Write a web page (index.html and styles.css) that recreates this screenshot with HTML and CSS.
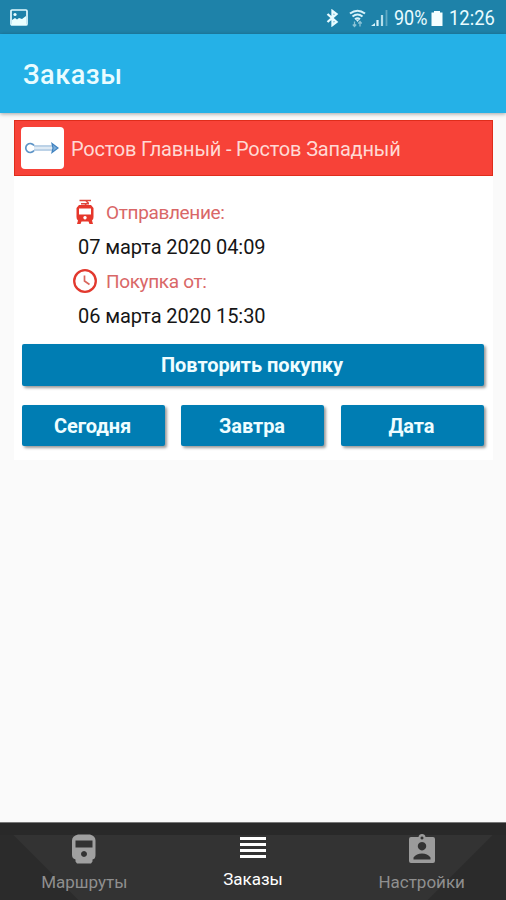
FILE: index.html
```html
<!DOCTYPE html>
<html lang="ru">
<head>
<meta charset="utf-8">
<title>Заказы</title>
<link rel="stylesheet" href="styles.css">
</head>
<body>
<div class="screen">
  <div class="status">
    <svg class="photo" width="18" height="17" viewBox="0 0 18 17"><rect x="1" y="1" width="16" height="15" rx="1" fill="none" stroke="#e4fbff" stroke-width="1.7"/><path d="M2 11l3-2 2 1.500 2-1.500 3 1 4-3v9H2z" fill="#eaffff"/><circle cx="5" cy="5.500" r="1.600" fill="#eaffff"/></svg>
    <div class="status-right">
      <svg class="bt" width="13" height="18" viewBox="0 0 13 18"><path d="M1.500 5l9 8L6.500 16V2L10.500 5l-9 8" fill="none" stroke="#e8fbff" stroke-width="2.300"/></svg>
      <svg class="wifi" width="17" height="19" viewBox="0 0 17 19"><path d="M1 4.500Q8.500-1 16 4.500M3.500 7.500Q8.500 3.500 13.500 7.500M6 10.300Q8.500 8.300 11 10.300" fill="none" stroke="#d8f3fa" stroke-width="2.100"/><path d="M7 11h3l-1.500 2z" fill="#d8f3fa"/><path d="M5.500 12.500v5M3.800 15.500l1.700 2 1.700-2M11 17.500v-5M9.300 14.500l1.700-2 1.700 2" fill="none" stroke="#8bc3d6" stroke-width="1.300"/></svg>
      <svg class="signal" width="17" height="18" viewBox="0 0 17 18"><path d="M0 17h4v-3z" fill="#d8f3fa"/><path d="M6.500 11v6" stroke="#d8f3fa" stroke-width="2.200"/><path d="M11 6v11" stroke="#b5deea" stroke-width="2.200"/><path d="M15.500 1v16" stroke="#60a9c3" stroke-width="1.800"/></svg>
      <span class="percent">90%</span>
      <svg class="battery" width="12" height="17" viewBox="0 0 12 17"><path d="M3 1h6v1.500h2.500v13.500H.5V2.500H3z" fill="#f5ffff"/></svg>
      <span class="time">12:26</span>
    </div>
  </div>
  <header class="bar"><h1>Заказы</h1></header>
  <main>
    <article class="card">
      <div class="route">
        <div class="badge"><svg width="42" height="42" viewBox="0 0 42 42"><path d="M13 18.500A4.500 4.500 0 1 0 13 23.500" fill="none" stroke="#5d94c7" stroke-width="1.700"/><path d="M13 19H31M13 23H31" stroke="#7ba6d0" stroke-width="1.200"/><path d="M13 21H31" stroke="#d5e3f0" stroke-width="1.500"/><path d="M31 16.500l6 4.500-6 4.500 1-4.500z" fill="#7cadd9" stroke="#4183c0" stroke-width="1.200"/></svg></div>
        <span class="route-name">Ростов Главный - Ростов Западный</span>
      </div>
      <div class="details">
        <div class="label"><svg width="26" height="26" viewBox="0 0 26 26"><path d="M7.500 1.500h11.500M14 2l2 1.800L13 6M9 4.800h8" fill="none" stroke="#df473c" stroke-width="1.400"/><path fill-rule="evenodd" d="M7 6h12l2.500 3v9q0 3-1.500 3.500L21 25h-3.500l-1-2.500h-7l-1 2.500H5l1-3.500Q4.500 21 4.500 18V9zM7 9.500v6h12V9.500zM13 17a1.700 1.700 0 1 0 .01 0z" fill="#e6372b"/></svg><span>Отправление:</span></div>
        <div class="value">07 марта 2020 04:09</div>
        <div class="label"><svg width="26" height="26" viewBox="0 0 26 26"><circle cx="13" cy="13" r="10.800" fill="none" stroke="#e2392e" stroke-width="2.300"/><path d="M12.500 7.500v5.500l5 3.500" fill="none" stroke="#d9675e" stroke-width="1.700"/></svg><span>Покупка от:</span></div>
        <div class="value">06 марта 2020 15:30</div>
      </div>
      <div class="actions">
        <button class="wide">Повторить покупку</button>
        <button>Сегодня</button>
        <button>Завтра</button>
        <button>Дата</button>
      </div>
    </article>
  </main>
  <nav>
    <div class="tab"><svg width="26" height="32" viewBox="0 0 26 32"><path fill-rule="evenodd" d="M7 1.500h12q5.500 1.500 5.500 6V22q0 4-3 4.500v2l-1.500 2H6l-1.500-2v-2Q1 25.500 1 22V7.500q0-4.500 6-6zM4.500 7.500v7h17v-7zM13 18a3 3 0 1 0 .01 0z" fill="#a0a0a0"/></svg><span>Маршруты</span></div>
    <div class="tab active"><svg width="26" height="32" viewBox="0 0 26 32"><path d="M0 5.500h26M0 11.500h26M0 17.500h26M0 23.500h26" stroke="#fff" stroke-width="3"/></svg><span>Заказы</span></div>
    <div class="tab"><svg width="26" height="32" viewBox="0 0 26 32"><path fill-rule="evenodd" d="M2 4h7.500Q10 1 13 1t3.500 3H24q2 0 2 2v22q0 2-2 2H2q-2 0-2-2V6q0-2 2-2zM13 3.500a1.500 1.500 0 1 0 .01 0zM13 9a4.200 4.200 0 1 0 .01 0zM4.500 26.500h17v-2q-3-4-8.500-4t-8.500 4z" fill="#9b9b9b"/></svg><span>Настройки</span></div>
  </nav>
</div>
</body>
</html>
```
FILE: styles.css
```css
* { box-sizing: border-box; }
body { margin: 0; font-family: Roboto, sans-serif; }
.screen { width: 506px; height: 900px; display: flex; flex-direction: column; background: #fafafa; overflow: hidden; }
.status { height: 34px; flex: none; display: flex; justify-content: space-between; align-items: flex-start; padding: 9px 11px 0 11px; background: #1e82a9; color: #e9fcff; }
.photo { margin-left: -1px; }
.status-right { display: flex; height: 18px; align-items: center; font-size: 20px; line-height: 18px; }
.bt { margin-right: 10px; }
.wifi { margin-right: 5px; }
.signal { margin-right: 6px; }
.percent { width: 37px; transform: scaleX(.9); transform-origin: left; white-space: nowrap; }
.battery { margin-right: 6px; }
.time { width: 46px; transform: scaleX(.92); transform-origin: left; white-space: nowrap; }
.bar { height: 79px; flex: none; display: flex; align-items: center; padding: 2px 23px 0; background: #25b1e7; box-shadow: 0 1px 4px rgba(0,0,0,.35); }
h1 { margin: 0; color: #e9fcff; font-size: 27px; font-weight: 500; letter-spacing: .6px; }
main { flex: 1; padding: 7px 13px 0 14px; }
.card { background: #fff; height: 340px; }
.route { height: 56px; display: flex; align-items: center; gap: 7px; padding-left: 6px; background: #f74238; border: 1px solid #df2d1b; }
.badge { width: 43px; height: 42px; border-radius: 4px; background: #fff; }
.badge svg { display: block; }
.route-name { padding-top: 2px; color: #ffd9d4; font-size: 20px; letter-spacing: -.18px; white-space: nowrap; }
.details { padding: 22px 0 0 58px; }
.label { height: 27px; display: flex; align-items: center; gap: 8px; color: #d96767; font-size: 19px; letter-spacing: -.35px; }
.label span { padding-top: 1px; }
.value { height: 42px; line-height: 44px; padding-left: 6px; font-size: 20px; letter-spacing: -.06px; color: #161616; white-space: nowrap; }
.actions { display: grid; grid-template-columns: repeat(3, 143px); justify-content: space-between; gap: 19px 0; padding: 8px 9.5px 0 7.5px; }
button { height: 41.5px; padding: 1px 1px 0 0; border: 0; border-radius: 2px; background: #007db3; box-shadow: 2px 2px 3px rgba(0,0,0,.4); color: #effdff; font: bold 20px Roboto, sans-serif; letter-spacing: -.08px; }
.wide { grid-column: 1 / -1; }
nav { height: 78px; flex: none; display: grid; grid-template-columns: 1fr 1fr 1fr; border-top: 1px solid #777; background: linear-gradient(#292929, #292929) top / 100% 12px no-repeat, linear-gradient(45deg, #2b2b2b 55px, transparent 56px) left / 120px 100% no-repeat, linear-gradient(-45deg, #2b2b2b 55px, transparent 56px) right / 120px 100% no-repeat, #333; }
.tab { display: flex; flex-direction: column; align-items: center; padding-top: 10px; color: #8f8f8f; font-size: 17px; line-height: 24px; }
.tab svg { margin-bottom: 5px; }
.tab.active { color: #fff; }
.active span { margin-top: -3px; }
```
